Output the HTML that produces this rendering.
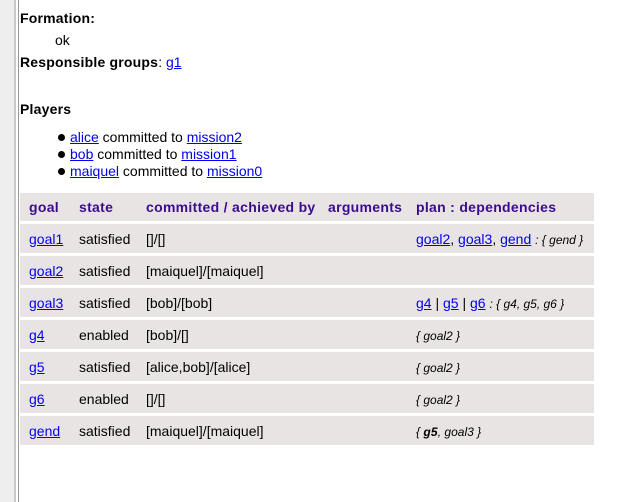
<!DOCTYPE html>
<html><head><style>
body{margin:0;width:632px;height:502px;background:#fff;font-family:"Liberation Sans",sans-serif;font-size:14px;color:#000;position:relative;overflow:hidden}
.lb{position:absolute;left:0;top:0;width:14px;height:502px;background:#eeeeee}
.l1{position:absolute;left:14px;top:0;width:2px;height:502px;background:#c8c8c8}
.l2{position:absolute;left:18px;top:0;width:1px;height:502px;background:#999}
.t{position:absolute;white-space:nowrap}
a{color:#00e;text-decoration:underline}
b{font-weight:bold;letter-spacing:0.2px}
.row{position:absolute;left:20px;width:574px;background:#e9e4e4}
.h{color:#3a0c8c;font-weight:bold;letter-spacing:0.3px}
i{font-size:12px}
.dot{position:absolute;width:7px;height:7px;border-radius:50%;background:#000}
</style></head><body>
<div class="lb"></div><div class="l1"></div><div class="l2"></div>
<div class="t" style="left:20px;top:10px"><b>Formation:</b></div>
<div class="t" style="left:55px;top:32px">ok</div>
<div class="t" style="left:20px;top:54px"><b>Responsible groups</b>: <a>g1</a></div>
<div class="t" style="left:20px;top:101px"><b>Players</b></div>
<div class="dot" style="left:58px;top:134px"></div>
<div class="dot" style="left:58px;top:151px"></div>
<div class="dot" style="left:58px;top:168px"></div>
<div class="t" style="left:70px;top:129px"><a>alice</a> committed to <a>mission2</a></div>
<div class="t" style="left:70px;top:146px"><a>bob</a> committed to <a>mission1</a></div>
<div class="t" style="left:70px;top:163px"><a>maiquel</a> committed to <a>mission0</a></div>

<div class="row" style="top:193px;height:28px"></div>
<div class="t h" style="left:29px;top:199px">goal</div>
<div class="t h" style="left:79px;top:199px">state</div>
<div class="t h" style="left:146px;top:199px">committed / achieved by</div>
<div class="t h" style="left:328px;top:199px">arguments</div>
<div class="t h" style="left:416px;top:199px">plan : dependencies</div>

<div class="row" style="top:224px;height:29px"></div>
<div class="row" style="top:256px;height:29px"></div>
<div class="row" style="top:288px;height:29px"></div>
<div class="row" style="top:320px;height:29px"></div>
<div class="row" style="top:352px;height:29px"></div>
<div class="row" style="top:384px;height:29px"></div>
<div class="row" style="top:416px;height:29px"></div>

<div class="t" style="left:29px;top:231px"><a>goal1</a></div><div class="t" style="left:79px;top:231px">satisfied</div><div class="t" style="left:146px;top:231px">[]/[]</div><div class="t" style="left:416px;top:231px"><a>goal2</a>, <a>goal3</a>, <a>gend</a> <i>: { gend }</i></div>
<div class="t" style="left:29px;top:263px"><a>goal2</a></div><div class="t" style="left:79px;top:263px">satisfied</div><div class="t" style="left:146px;top:263px">[maiquel]/[maiquel]</div>
<div class="t" style="left:29px;top:295px"><a>goal3</a></div><div class="t" style="left:79px;top:295px">satisfied</div><div class="t" style="left:146px;top:295px">[bob]/[bob]</div><div class="t" style="left:416px;top:295px"><a>g4</a> | <a>g5</a> | <a>g6</a> <i>: { g4, g5, g6 }</i></div>
<div class="t" style="left:29px;top:327px"><a>g4</a></div><div class="t" style="left:79px;top:327px">enabled</div><div class="t" style="left:146px;top:327px">[bob]/[]</div><div class="t" style="left:416px;top:327px"><i>{ goal2 }</i></div>
<div class="t" style="left:29px;top:359px"><a>g5</a></div><div class="t" style="left:79px;top:359px">satisfied</div><div class="t" style="left:146px;top:359px">[alice,bob]/[alice]</div><div class="t" style="left:416px;top:359px"><i>{ goal2 }</i></div>
<div class="t" style="left:29px;top:391px"><a>g6</a></div><div class="t" style="left:79px;top:391px">enabled</div><div class="t" style="left:146px;top:391px">[]/[]</div><div class="t" style="left:416px;top:391px"><i>{ goal2 }</i></div>
<div class="t" style="left:29px;top:423px"><a>gend</a></div><div class="t" style="left:79px;top:423px">satisfied</div><div class="t" style="left:146px;top:423px">[maiquel]/[maiquel]</div><div class="t" style="left:416px;top:423px"><i>{ <b>g5</b>, goal3 }</i></div>
</body></html>
